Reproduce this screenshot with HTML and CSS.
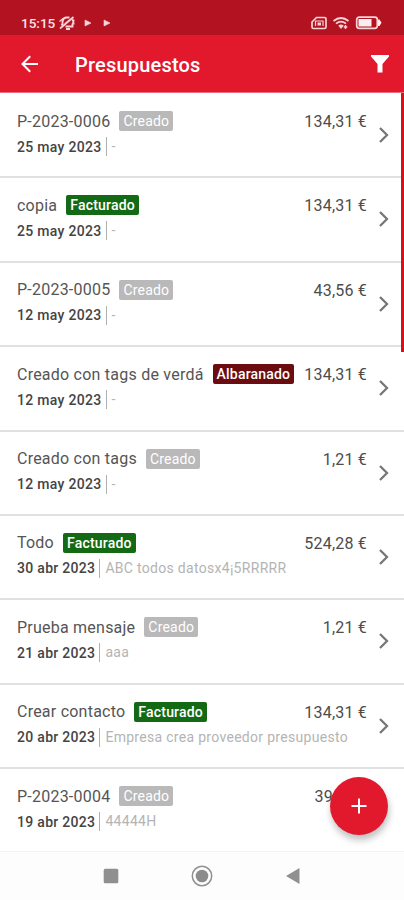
FILE: index.html
```html
<!DOCTYPE html>
<html lang="es">
<head>
<meta charset="utf-8">
<title>Presupuestos</title>
<link rel="stylesheet" href="styles.css">
</head>
<body>
<div class="phone">
  <div class="status">
    <span class="time">15:15</span>
    <svg class="status-left" width="60" height="16" viewBox="0 0 60 16" fill="none" stroke="#f7d5d8">
      <path d="M3.500 10.500 4.500 9V6.500Q5 3 8 2.500h3.500M14 5l1.500.5-.5 3h1.500M14.500 8.500v3h-7M8 14h4" stroke-width="1.900"/>
      <path d="M2 13.500 15.500 2" stroke-width="1.700"/>
      <path d="M1.500 6.500 5 3.500M7.500 8.500 11 5.500" stroke-width="1.300"/>
      <path d="M27 5l6 3-6 3zM46 5l6 3-6 3z" fill="#f7d5d8" stroke="#f7d5d8" stroke-width=".6"/>
    </svg>
    <svg class="status-right" width="72" height="16" viewBox="0 0 72 16" fill="none" stroke="#f7d5d8">
      <path d="M5.500 2.500h8q1.500 0 1.500 1.500v8q0 1.500-1.500 1.500h-11Q1 13.500 1 12V7z" stroke-width="1.700"/>
      <path d="M4.500 11V6h7.500v5" stroke-width="1.200"/>
      <path d="M6.500 7.500h3.500v3H6.500z" fill="#f7d5d8" stroke="none"/>
      <path d="M22.500 6q7.500-6 15 0M25 8.700q5-4 10 0" stroke-width="1.700"/>
      <path d="M27.300 10.500q2.700-2 5.400 0L30 14z" fill="#f7d5d8" stroke="none"/>
      <path d="M34.500 10v4M32.700 12h3.600" stroke-width="1.400"/>
      <rect x="45.700" y="2.200" width="20.600" height="11.100" rx="2.500" stroke-width="1.700"/>
      <path d="M47.500 4h13v7.500h-13zM67 4.500h1.500l2 3.300-2 3.300H67z" fill="#fbeeee" stroke="none"/>
    </svg>
  </div>
  <header class="appbar">
    <svg class="back" width="18" height="18" viewBox="0 0 18 18" fill="none" stroke="#fff" stroke-width="2"><path d="M17 9H2M9.200 1.200 1.500 9l7.700 7.800"/></svg>
    <h1>Presupuestos</h1>
    <svg class="filter" width="18" height="18" viewBox="0 0 18 18" fill="#fff"><path d="M0 0h18v1.500L11.500 9v8.500h-5V9L0 1.500z"/></svg>
  </header>
  <main class="list">
    <div class="row"><div class="info"><div class="line"><span class="name">P-2023-0006</span><span class="tag">Creado</span></div><div class="meta"><b>25 may 2023</b><span>-</span></div></div><div class="price">134,31 €</div><svg class="chev" width="12" height="18" viewBox="0 0 12 18"><path d="M2 2l7 7-7 7"/></svg></div>
    <div class="row"><div class="info"><div class="line"><span class="name">copia</span><span class="tag green">Facturado</span></div><div class="meta"><b>25 may 2023</b><span>-</span></div></div><div class="price">134,31 €</div><svg class="chev" width="12" height="18" viewBox="0 0 12 18"><path d="M2 2l7 7-7 7"/></svg></div>
    <div class="row"><div class="info"><div class="line"><span class="name">P-2023-0005</span><span class="tag">Creado</span></div><div class="meta"><b>12 may 2023</b><span>-</span></div></div><div class="price">43,56 €</div><svg class="chev" width="12" height="18" viewBox="0 0 12 18"><path d="M2 2l7 7-7 7"/></svg></div>
    <div class="row"><div class="info"><div class="line"><span class="name">Creado con tags de verdá</span><span class="tag maroon">Albaranado</span></div><div class="meta"><b>12 may 2023</b><span>-</span></div></div><div class="price">134,31 €</div><svg class="chev" width="12" height="18" viewBox="0 0 12 18"><path d="M2 2l7 7-7 7"/></svg></div>
    <div class="row"><div class="info"><div class="line"><span class="name">Creado con tags</span><span class="tag">Creado</span></div><div class="meta"><b>12 may 2023</b><span>-</span></div></div><div class="price">1,21 €</div><svg class="chev" width="12" height="18" viewBox="0 0 12 18"><path d="M2 2l7 7-7 7"/></svg></div>
    <div class="row"><div class="info"><div class="line"><span class="name">Todo</span><span class="tag green">Facturado</span></div><div class="meta"><b>30 abr 2023</b><span>ABC todos datosx4¡5RRRRR</span></div></div><div class="price">524,28 €</div><svg class="chev" width="12" height="18" viewBox="0 0 12 18"><path d="M2 2l7 7-7 7"/></svg></div>
    <div class="row"><div class="info"><div class="line"><span class="name">Prueba mensaje</span><span class="tag">Creado</span></div><div class="meta"><b>21 abr 2023</b><span>aaa</span></div></div><div class="price">1,21 €</div><svg class="chev" width="12" height="18" viewBox="0 0 12 18"><path d="M2 2l7 7-7 7"/></svg></div>
    <div class="row"><div class="info"><div class="line"><span class="name">Crear contacto</span><span class="tag green">Facturado</span></div><div class="meta"><b>20 abr 2023</b><span>Empresa crea proveedor presupuesto</span></div></div><div class="price">134,31 €</div><svg class="chev" width="12" height="18" viewBox="0 0 12 18"><path d="M2 2l7 7-7 7"/></svg></div>
    <div class="row"><div class="info"><div class="line"><span class="name">P-2023-0004</span><span class="tag">Creado</span></div><div class="meta"><b>19 abr 2023</b><span>44444H</span></div></div><div class="price cut">39</div></div>
    <div class="scrollbar"></div>
    <div class="fab"><svg width="16" height="16" viewBox="0 0 16 16" stroke="#fff" stroke-width="2"><path d="M8 .5v15M.5 8h15"/></svg></div>
  </main>
  <nav class="nav">
    <svg width="16" height="16" viewBox="0 0 16 16"><rect x=".7" y=".7" width="14.600" height="14.600" rx="1.500" fill="#909090"/></svg>
    <svg width="22" height="22" viewBox="0 0 22 22"><circle cx="11" cy="11" r="9.700" fill="none" stroke="#909090" stroke-width="1.500"/><circle cx="11" cy="11" r="6.300" fill="#8c8c8c"/></svg>
    <svg width="16" height="18" viewBox="0 0 16 18"><path d="M1 9 14.500 1v16z" fill="#909090"/></svg>
  </nav>
</div>
</body>
</html>
```
FILE: styles.css
```css
* { box-sizing: border-box; }
body { margin: 0; font-family: Roboto, sans-serif; background: #fff; }
svg { display: block; flex: none; }
.phone { width: 404px; height: 900px; display: flex; flex-direction: column; overflow: hidden; }
.status { height: 35px; flex: none; background: #b31220; display: flex; align-items: center; padding: 11px 21px 0 21px; color: #fbe3e5; }
.time { font-size: 13.500px; font-weight: 500; letter-spacing: 0; width: 37px; white-space: nowrap; }
.status-right { margin-left: auto; }
.appbar { height: 58px; flex: none; background: #e2182d; display: flex; align-items: center; padding: 0 15px 0 21px; color: #fff; border-bottom: 1px solid #e8707c; }
.appbar h1 { margin: 2px 0 0 36px; font-size: 20px; font-weight: 500; letter-spacing: .2px; flex: 1; }
.back { margin-top: 1px; }
.list { position: relative; height: 759px; flex: none; border-bottom: 1px solid #f3f3f3; }
.row { height: 84.400px; display: flex; align-items: flex-start; padding: 17px 14px 0 17px; border-bottom: 2px solid #e0e0e0; }
.row:first-child { height: 85.400px; padding-top: 18px; }
.row:nth-child(9) { height: 81px; border-bottom: 0; }
.info { flex: 1; min-width: 0; }
.line { display: flex; align-items: center; height: 20px; white-space: nowrap; }
.name { font-size: 16px; letter-spacing: .23px; color: #555; }
.tag { margin-left: 9px; height: 20px; line-height: 20px; padding: 0 4px; border-radius: 2px; background: #b9b9b9; color: #fff; font-size: 14px; letter-spacing: .2px; }
.green { background: #146a14; font-weight: 500; }
.maroon { background: #6a0c10; font-weight: 500; }
.meta { display: flex; align-items: center; height: 20px; margin-top: 5.500px; font-size: 14px; color: #b4b4b4; white-space: nowrap; letter-spacing: .3px; }
.meta b { font-weight: 500; color: #444; padding-right: 4px; }
.meta span { border-left: 1px solid #b0b0b0; height: 19px; line-height: 19px; padding-left: 5px; }
.price { font-size: 16px; line-height: 20px; margin-top: 1px; letter-spacing: .2px; color: #4c4c4c; white-space: nowrap; }
.cut { margin-right: 57px; }
.chev { margin: 15px 0 0 11px; fill: none; stroke: #777; stroke-width: 2.300; }
.scrollbar { position: absolute; right: 0; top: 0; width: 3px; height: 259px; background: #dc0d17; }
.fab { position: absolute; left: 330px; top: 684px; width: 58px; height: 58px; border-radius: 50%; background: #e2182d; box-shadow: 1px 5px 7px rgba(0,0,0,.25); display: flex; align-items: center; justify-content: center; }
.nav { flex: 1; background: #fdfdfd; display: flex; align-items: center; gap: 72px; padding: 0 0 0 103px; }
```
